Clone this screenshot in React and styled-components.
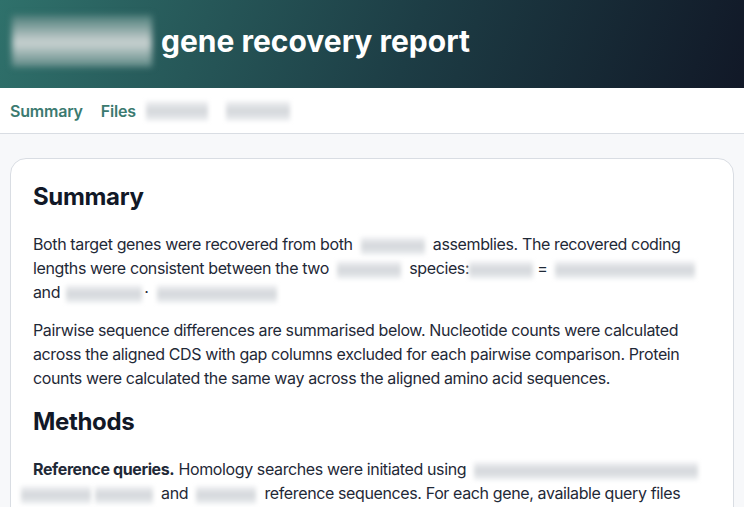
import React from 'react'
import styled, { createGlobalStyle } from 'styled-components';

const GlobalStyle = createGlobalStyle`
    body {
        margin:0;
        background:#f7f8fa;
        font-family: Inter, "Noto Sans", sans-serif;
        color:#1f2937;
    }
`;

const Header = styled.header`
    height:88px;
    display:flex;
    align-items:center;
    padding:0 12px 6px;
    box-sizing:border-box;
    background: linear-gradient(110deg, #2f716b 0%, #1d3d45 55%, #111827 100%);
`;

const Title = styled.h1`
    margin:0;
    display:flex;
    align-items:center;
    gap:9px;
    font-size:30px;
    font-weight:700;
    letter-spacing:0;
    color:#fff;
`;

const Redacted = styled.span`
    display:inline-block;
    vertical-align:middle;
    width:${props => props.w}px;
    height:${props => props.h || 18}px;
    margin:${props => props.m || "0 4px"};
    background:${props => props.dark
        ? "linear-gradient(180deg,#4a7c78 0%,#b9c6c5 45%,#c9d2d1 55%,#5d8885 100%)"
        : "linear-gradient(180deg,#f1f2f4 0%,#d3d6da 50%,#eef0f2 100%)"};
    filter: blur(${props => props.dark ? 3 : 2}px);
`;

const Nav = styled.nav`
    height:45px;
    display:flex;
    align-items:center;
    gap:18px;
    padding:0 10px;
    background:#fff;
    border-bottom:1px solid #d9dde3;
`;

const NavLink = styled.a`
    font-size:16px;
    font-weight:600;
    color:#3b7a70;
    letter-spacing:-0.2px;
`;

const Main = styled.main`
    padding:24px 10px;
`;

const Card = styled.section`
    background:#fff;
    border:1px solid #d9dde3;
    border-radius:16px;
    padding:22px 22px;
`;

const Heading = styled.h2`
    margin:${props => props.first ? "0" : "16px"} 0 20px;
    font-size:24px;
    line-height:31px;
    font-weight:700;
    color:#111827;
    letter-spacing:-0.35px;
`;

const Para = styled.p`
    margin:0 0 14px;
    font-size:16px;
    line-height:24px;
    color:#1f2937;
    letter-spacing:-0.38px;
`;

export default function App() {
  return (
    <>
      <GlobalStyle/>
      <Header>
        <Title>
            <Redacted dark w={140} h={52} m="0"/>
            gene recovery report
        </Title>
      </Header>
      <Nav>
        <NavLink>Summary</NavLink>
        <NavLink>Files</NavLink>
        <Redacted w={62} h={20} m="0 0 0 -8px"/>
        <Redacted w={64} h={20} m="0"/>
      </Nav>
      <Main>
        <Card>
            <Heading first>Summary</Heading>
            <Para>
                Both target genes were recovered from both <Redacted w={64}/> assemblies. The recovered coding
                lengths were consistent between the two <Redacted w={64}/> species:<Redacted w={64} m="0 4px 0 0"/>= <Redacted w={140}/>
                and <Redacted w={76} m="0 2px 0 2px"/>· <Redacted w={120}/>
            </Para>
            <Para>
                Pairwise sequence differences are summarised below. Nucleotide counts were calculated
                across the aligned CDS with gap columns excluded for each pairwise comparison. Protein
                counts were calculated the same way across the aligned amino acid sequences.
            </Para>
            <Heading>Methods</Heading>
            <Para>
                <b>Reference queries.</b> Homology searches were initiated using <Redacted w={224}/>
                <Redacted w={70} m="0 0 0 -12px"/><Redacted w={58}/> and <Redacted w={60}/> reference sequences. For each gene, available query files
            </Para>
        </Card>
      </Main>
    </>
  )
}
